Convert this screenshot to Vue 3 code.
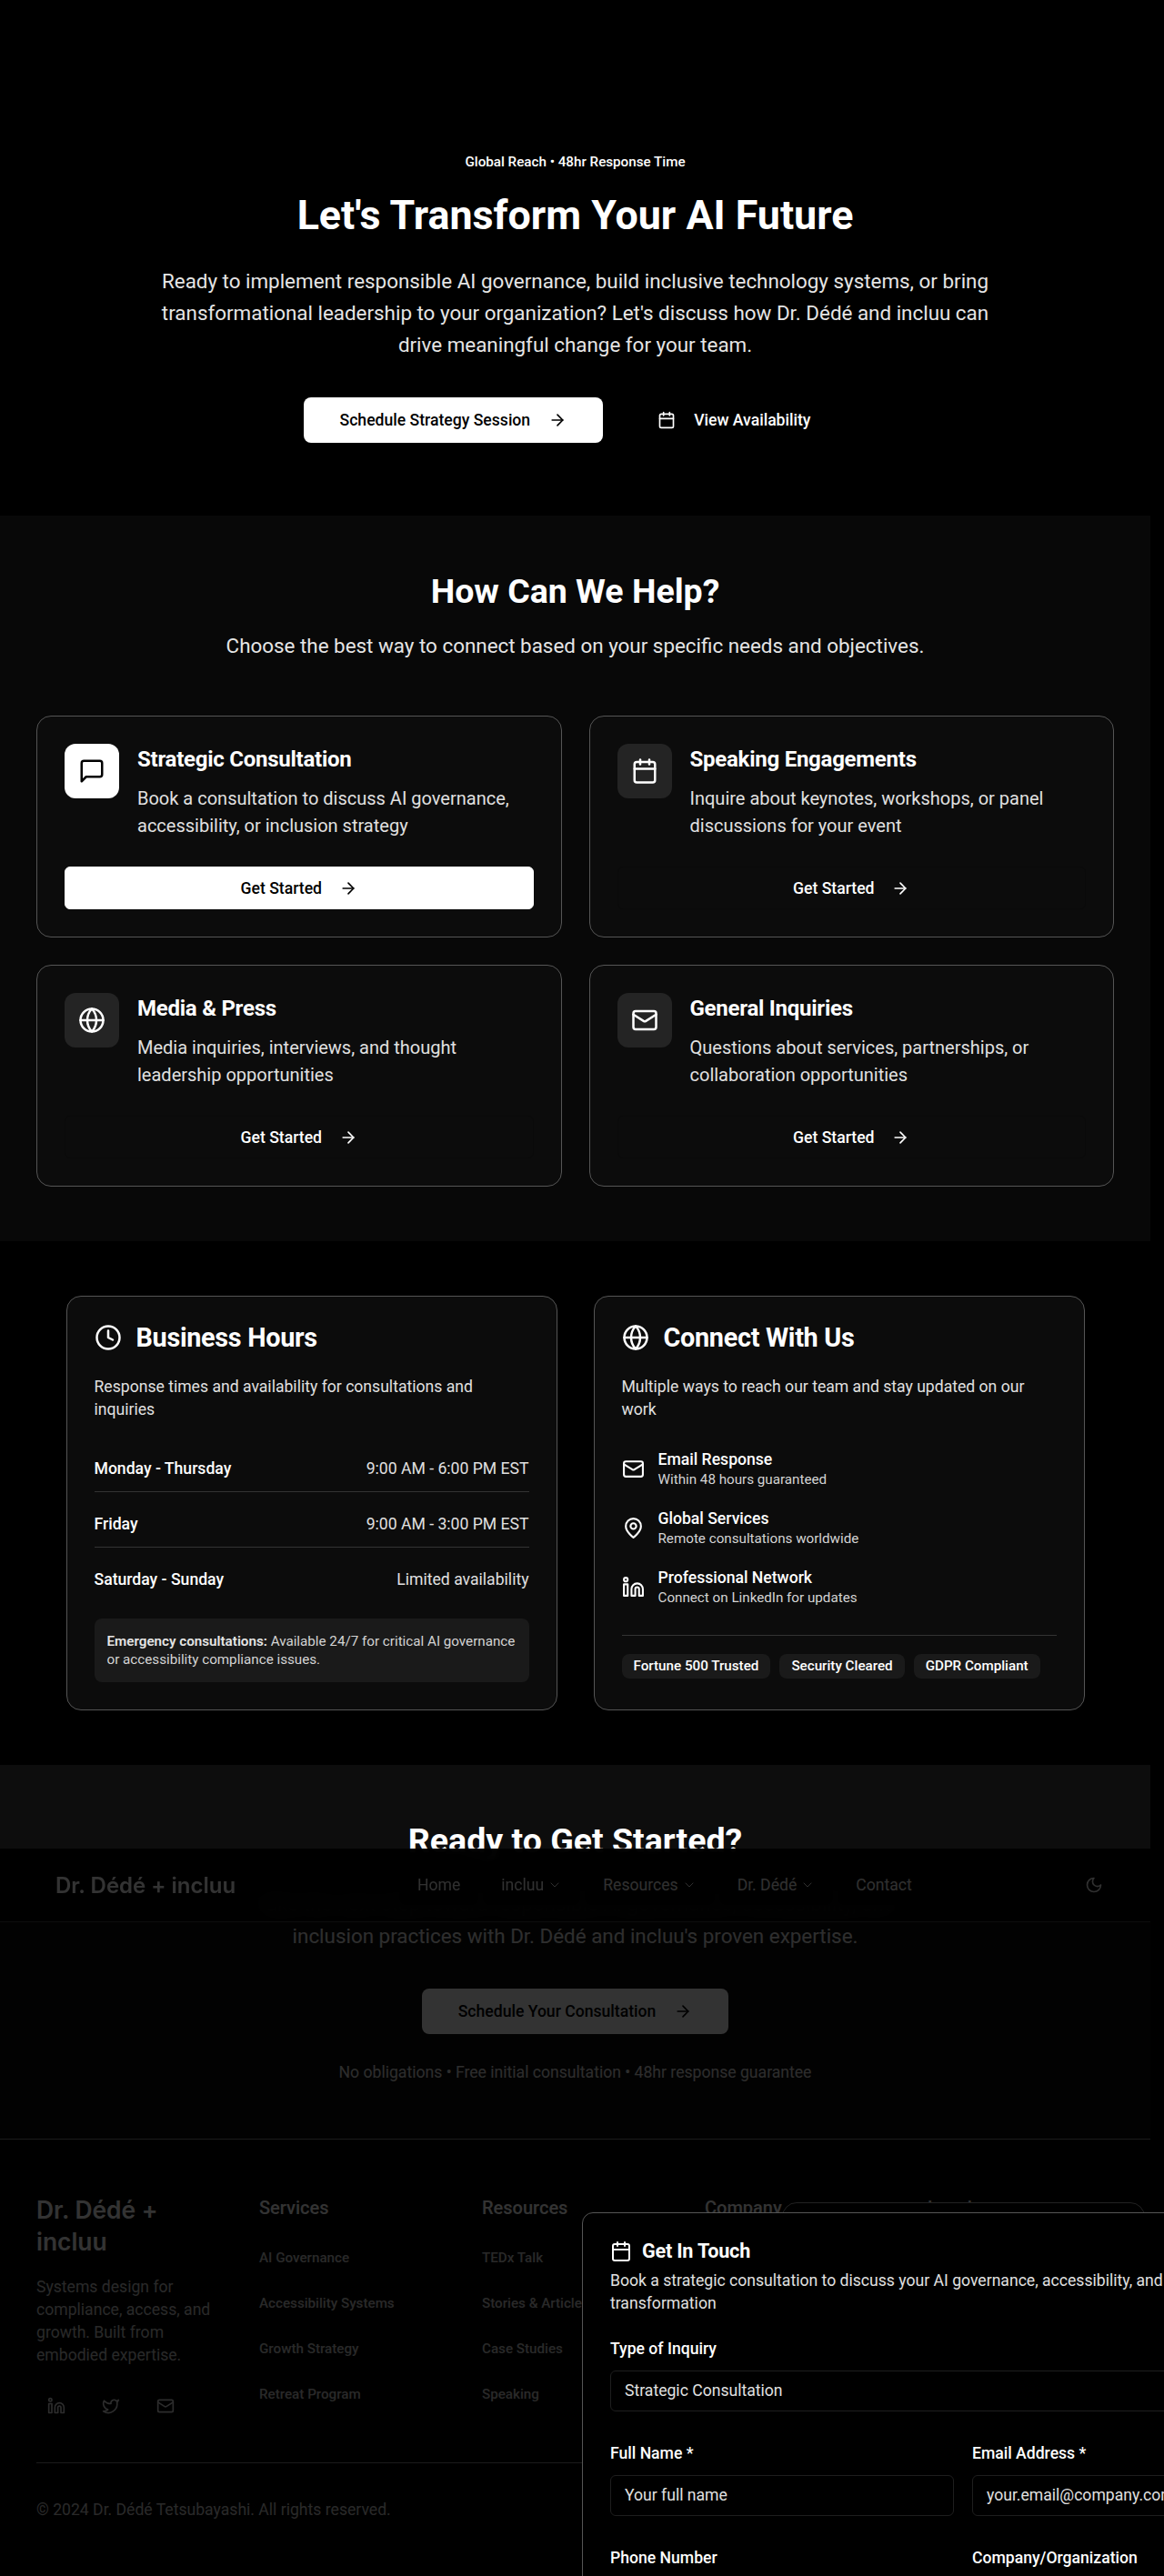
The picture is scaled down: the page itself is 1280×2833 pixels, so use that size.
<script setup>
const icons = {
  arrow: '<path d="M5 12h14"/><path d="m12 5 7 7-7 7"/>',
  calendar: '<rect x="3" y="4" width="18" height="18" rx="2"/><path d="M16 2v4"/><path d="M8 2v4"/><path d="M3 10h18"/>',
  message: '<path d="M21 15a2 2 0 0 1-2 2H7l-4 4V5a2 2 0 0 1 2-2h14a2 2 0 0 1 2 2z"/>',
  globe: '<circle cx="12" cy="12" r="10"/><path d="M12 2a14.5 14.5 0 0 0 0 20 14.5 14.5 0 0 0 0-20"/><path d="M2 12h20"/>',
  mail: '<rect x="2" y="4" width="20" height="16" rx="2"/><path d="m22 7-8.97 5.7a1.94 1.94 0 0 1-2.06 0L2 7"/>',
  clock: '<circle cx="12" cy="12" r="10"/><path d="M12 6v6l4 2"/>',
  pin: '<path d="M20 10c0 6-8 12-8 12s-8-6-8-12a8 8 0 0 1 16 0Z"/><circle cx="12" cy="10" r="3"/>',
  linkedin: '<path d="M16 8a6 6 0 0 1 6 6v7h-4v-7a2 2 0 0 0-2-2 2 2 0 0 0-2 2v7h-4v-7a6 6 0 0 1 6-6z"/><rect x="2" y="9" width="4" height="12"/><circle cx="4" cy="4" r="2"/>',
  twitter: '<path d="M22 4s-.7 2.1-2 3.4c1.6 10-9.4 17.3-18 11.6 2.2.1 4.4-.6 6-2C3 15.5.5 9.6 3 5c2.2 2.6 5.6 4.1 9 4-.9-4.2 4-6.6 7-3.8 1.1 0 3-1.2 3-1.2z"/>',
  moon: '<path d="M12 3a6 6 0 0 0 9 9 9 9 0 1 1-9-9Z"/>',
  chevron: '<path d="m6 9 6 6 6-6"/>'
}

const helpCards = [
  { icon: 'message', title: 'Strategic Consultation', text: 'Book a consultation to discuss AI governance, accessibility, or inclusion strategy', primary: true },
  { icon: 'calendar', title: 'Speaking Engagements', text: 'Inquire about keynotes, workshops, or panel discussions for your event' },
  { icon: 'globe', title: 'Media & Press', text: 'Media inquiries, interviews, and thought leadership opportunities' },
  { icon: 'mail', title: 'General Inquiries', text: 'Questions about services, partnerships, or collaboration opportunities' }
]

const hours = [
  { day: 'Monday - Thursday', time: '9:00 AM - 6:00 PM EST' },
  { day: 'Friday', time: '9:00 AM - 3:00 PM EST' },
  { day: 'Saturday - Sunday', time: 'Limited availability' }
]

const channels = [
  { icon: 'mail', title: 'Email Response', text: 'Within 48 hours guaranteed' },
  { icon: 'pin', title: 'Global Services', text: 'Remote consultations worldwide' },
  { icon: 'linkedin', title: 'Professional Network', text: 'Connect on LinkedIn for updates' }
]

const chips = ['Fortune 500 Trusted', 'Security Cleared', 'GDPR Compliant']

const footerCols = [
  { title: 'Services', links: ['AI Governance', 'Accessibility Systems', 'Growth Strategy', 'Retreat Program'] },
  { title: 'Resources', links: ['TEDx Talk', 'Stories & Articles', 'Case Studies', 'Speaking'] },
  { title: 'Company', links: ['About', 'incluu', 'Contact', 'Careers'] },
  { title: 'Legal', links: ['Privacy Policy', 'Terms of Service', 'Accessibility', 'Cookies'] }
]

const navLinks = [
  { label: 'Home' },
  { label: 'incluu', menu: true },
  { label: 'Resources', menu: true },
  { label: 'Dr. Dédé', menu: true },
  { label: 'Contact' }
]
</script>

<template>
  <div class="page">
    <main class="content">
      <section class="hero">
        <p class="badge">Global Reach • 48hr Response Time</p>
        <h1>Let's Transform Your AI Future</h1>
        <p class="lead hero-lead">Ready to implement responsible AI governance, build inclusive technology systems, or bring transformational leadership to your organization? Let's discuss how Dr. Dédé and incluu can drive meaningful change for your team.</p>
        <div class="hero-actions">
          <a class="btn btn-white">Schedule Strategy Session<svg class="ic i20" viewBox="0 0 24 24" v-html="icons.arrow"></svg></a>
          <a class="btn btn-plain"><svg class="ic i20" viewBox="0 0 24 24" v-html="icons.calendar"></svg>View Availability</a>
        </div>
      </section>

      <section class="help">
        <h2>How Can We Help?</h2>
        <p class="lead help-lead">Choose the best way to connect based on your specific needs and objectives.</p>
        <div class="help-grid">
          <article v-for="c in helpCards" :key="c.title" class="card help-card">
            <div class="help-top">
              <div class="icon-box" :class="{ 'icon-box-white': c.primary }">
                <svg class="ic i30" viewBox="0 0 24 24" v-html="icons[c.icon]"></svg>
              </div>
              <div>
                <h3>{{ c.title }}</h3>
                <p>{{ c.text }}</p>
              </div>
            </div>
            <a class="btn-card" :class="{ 'btn-card-white': c.primary }">Get Started<svg class="ic i20" viewBox="0 0 24 24" v-html="icons.arrow"></svg></a>
          </article>
        </div>
      </section>

      <section class="info">
        <div class="info-grid">
          <article class="card info-card">
            <h3 class="info-title"><svg class="ic i30" viewBox="0 0 24 24" v-html="icons.clock"></svg>Business Hours</h3>
            <p class="info-text">Response times and availability for consultations and inquiries</p>
            <ul class="hours">
              <li v-for="h in hours" :key="h.day"><strong>{{ h.day }}</strong><span>{{ h.time }}</span></li>
            </ul>
            <p class="emergency"><strong>Emergency consultations:</strong> Available 24/7 for critical AI governance or accessibility compliance issues.</p>
          </article>
          <article class="card info-card">
            <h3 class="info-title"><svg class="ic i30" viewBox="0 0 24 24" v-html="icons.globe"></svg>Connect With Us</h3>
            <p class="info-text">Multiple ways to reach our team and stay updated on our work</p>
            <ul class="channels">
              <li v-for="c in channels" :key="c.title">
                <svg class="ic i25" viewBox="0 0 24 24" v-html="icons[c.icon]"></svg>
                <div><strong>{{ c.title }}</strong><span>{{ c.text }}</span></div>
              </li>
            </ul>
            <div class="chips"><span v-for="c in chips" :key="c">{{ c }}</span></div>
          </article>
        </div>
      </section>

      <section class="ready">
        <h2>Ready to Get Started?</h2>
        <p class="lead ready-lead">Take the next step toward responsible AI governance, accessibility, and inclusion practices with Dr. Dédé and incluu's proven expertise.</p>
        <a class="btn btn-white">Schedule Your Consultation<svg class="ic i20" viewBox="0 0 24 24" v-html="icons.arrow"></svg></a>
        <p class="ready-note">No obligations • Free initial consultation • 48hr response guarantee</p>
      </section>

      <footer class="footer">
        <div class="footer-grid">
          <div>
            <div class="footer-logo">Dr. Dédé + incluu</div>
            <p class="footer-text">Systems design for compliance, access, and growth. Built from embodied expertise.</p>
            <div class="socials">
              <a><svg class="ic i20" viewBox="0 0 24 24" v-html="icons.linkedin"></svg></a>
              <a><svg class="ic i20" viewBox="0 0 24 24" v-html="icons.twitter"></svg></a>
              <a><svg class="ic i20" viewBox="0 0 24 24" v-html="icons.mail"></svg></a>
            </div>
          </div>
          <div v-for="col in footerCols" :key="col.title">
            <h4>{{ col.title }}</h4>
            <ul class="footer-links"><li v-for="l in col.links" :key="l">{{ l }}</li></ul>
          </div>
        </div>
        <div class="footer-bottom">© 2024 Dr. Dédé Tetsubayashi. All rights reserved.</div>
      </footer>
    </main>

    <header class="topnav">
      <div class="nav-logo">Dr. Dédé + incluu</div>
      <nav class="nav-links">
        <a v-for="n in navLinks" :key="n.label">{{ n.label }}<svg v-if="n.menu" class="ic i16 thin" viewBox="0 0 24 24" v-html="icons.chevron"></svg></a>
      </nav>
      <svg class="ic i20 moon" viewBox="0 0 24 24" v-html="icons.moon"></svg>
    </header>

    <div class="scrim">
      <div class="back-panel"></div>
      <aside class="modal">
        <h3 class="modal-title"><svg class="ic i24" viewBox="0 0 24 24" v-html="icons.calendar"></svg>Get In Touch</h3>
        <p class="modal-text">Book a strategic consultation to discuss your AI governance, accessibility, and transformation</p>
        <label class="field-label field-first">Type of Inquiry</label>
        <div class="field">Strategic Consultation</div>
        <div class="form-row">
          <div>
            <label class="field-label">Full Name *</label>
            <div class="field">Your full name</div>
          </div>
          <div>
            <label class="field-label">Email Address *</label>
            <div class="field">your.email@company.com</div>
          </div>
        </div>
        <div class="form-row">
          <div>
            <label class="field-label">Phone Number</label>
            <div class="field">+1 (555) 000-0000</div>
          </div>
          <div>
            <label class="field-label">Company/Organization</label>
            <div class="field">Your company</div>
          </div>
        </div>
      </aside>
    </div>
  </div>
</template>

<style>
html, body { margin: 0; background: #000; }
</style>

<style scoped>
* { box-sizing: border-box; }
.page { position: relative; width: 1280px; height: 2833px; overflow: hidden; background: #000; color: #fff; font-family: Roboto, "Liberation Sans", sans-serif; }
.content { width: 1265px; }
h1, h2, h3, h4, p, ul { margin: 0; padding: 0; }
ul { list-style: none; }
.ic { display: block; flex: none; fill: none; stroke: currentColor; stroke-width: 2; stroke-linecap: round; stroke-linejoin: round; }
.thin { stroke-width: 1.5; }
.i16 { width: 16px; height: 16px; }
.i20 { width: 20px; height: 20px; }
.i24 { width: 24px; height: 24px; }
.i25 { width: 25px; height: 25px; }
.i30 { width: 30px; height: 30px; }

.lead { font-size: 22.4px; line-height: 35px; color: #e5e5e5; }
h2 { font-size: 37.5px; line-height: 46px; font-weight: 700; text-align: center; }

.hero { padding: 168px 0 80px; text-align: center; }
.badge { font-size: 15.2px; line-height: 20px; font-weight: 500; }
h1 { margin-top: 23px; font-size: 44.8px; line-height: 52px; font-weight: 700; }
.hero-lead { width: 930px; margin: 29px auto 0; }
.hero-actions { display: flex; justify-content: center; gap: 20px; margin-top: 40px; }
.btn { display: inline-flex; align-items: center; gap: 20px; height: 50px; padding: 0 39px; border: 1px solid transparent; border-radius: 8px; font-size: 17.6px; font-weight: 500; }
.btn-white { background: #fff; color: #000; }
.btn-plain { color: #fff; }

.help { padding: 60px 40px; background: #080808; }
.help-lead { margin-top: 20px; text-align: center; }
.help-grid { display: grid; grid-template-columns: 1fr 1fr; gap: 30px; margin-top: 59px; }
.card { background: #0c0c0c; border: 1px solid #555; border-radius: 16px; }
.help-card { padding: 30px; height: 244px; }
.help-top { display: flex; gap: 20px; }
.icon-box { display: flex; align-items: center; justify-content: center; flex: none; width: 60px; height: 60px; border-radius: 12px; background: #242424; color: #fff; }
.icon-box-white { background: #fff; color: #000; }
.help-card h3 { margin-top: 1px; font-size: 24px; line-height: 32px; font-weight: 700; letter-spacing: -0.25px; }
.help-card p { margin-top: 12px; font-size: 20px; line-height: 30px; color: #e0e0e0; }
.btn-card { display: flex; align-items: center; justify-content: center; gap: 19px; height: 47px; margin-top: 30px; border: 1px solid #0a0a0a; border-radius: 6px; color: #fff; font-size: 17.6px; font-weight: 500; }
.btn-card-white { background: #fff; border-color: #fff; color: #000; }

.info { padding: 60px 0; }
.info-grid { display: grid; grid-template-columns: 540px 540px; gap: 40px; justify-content: center; }
.info-card { padding: 30px; height: 456px; }
.info-title { display: flex; align-items: center; gap: 16px; font-size: 28.8px; line-height: 30px; font-weight: 700; letter-spacing: -0.3px; }
.info-text { margin-top: 27px; font-size: 17.6px; line-height: 25px; color: #e0e0e0; }
.hours { margin-top: 40px; font-size: 17.6px; line-height: 25px; }
.hours li { display: flex; justify-content: space-between; padding-bottom: 12px; margin-bottom: 23px; border-bottom: 1px solid #333; }
.hours li:last-child { padding: 0; margin: 0; border: 0; }
.hours strong { font-weight: 500; }
.hours span { color: #e0e0e0; }
.emergency { margin-top: 30px; padding: 15px 14px; border-radius: 8px; background: #1a1a1a; font-size: 15.2px; line-height: 20px; color: #d4d4d4; }
.emergency strong { font-weight: 600; color: #e5e5e5; }
.channels { display: flex; flex-direction: column; gap: 21px; margin-top: 30px; }
.channels li { display: flex; align-items: center; gap: 15px; }
.channels strong { display: block; font-size: 17.6px; line-height: 24px; font-weight: 500; }
.channels span { display: block; font-size: 15.2px; line-height: 20px; color: #d4d4d4; }
.chips { display: flex; gap: 10px; margin-top: 31px; padding-top: 20px; border-top: 1px solid #333; }
.chips span { height: 27px; padding: 0 13px; border-radius: 8px; background: #1a1a1a; font-size: 15.2px; line-height: 27px; font-weight: 500; }

.ready { padding: 60px 40px; background: #0d0d0d; text-align: center; }
.ready-lead { width: 770px; margin: 30px auto 40px; }
.ready .btn { vertical-align: top; }
.ready-note { margin-top: 30px; font-size: 17.6px; line-height: 25px; color: #e0e0e0; }

.footer { padding: 60px 40px 0; border-top: 1px solid #888; background: #000; }
.footer-grid { display: grid; grid-template-columns: repeat(5, 1fr); gap: 40px; }
.footer-logo { width: 180px; font-family: Inter, Roboto, sans-serif; font-size: 26.4px; line-height: 35px; font-weight: 600; color: #fff; }
.footer-text { margin-top: 20px; font-size: 17.6px; line-height: 25px; color: #ccc; }
.socials { display: flex; gap: 16px; margin-top: 21px; }
.socials a { display: flex; align-items: center; justify-content: center; width: 44px; height: 44px; color: #ddd; }
.footer h4 { font-size: 20px; line-height: 30px; font-weight: 500; }
.footer-links { display: flex; flex-direction: column; gap: 16px; margin-top: 23px; }
.footer-links li { font-size: 15.2px; line-height: 34px; font-weight: 500; color: #ccc; }
.footer-bottom { margin-top: 40px; padding-top: 39px; border-top: 1px solid #888; font-size: 17.6px; line-height: 25px; color: #ccc; }

.topnav { position: absolute; top: 2033px; left: 0; display: flex; align-items: center; width: 1265px; height: 81px; padding: 0 52px 0 61px; border-bottom: 1px solid #444; background: rgba(0, 0, 0, 0.85); backdrop-filter: blur(12px); }
.nav-logo { width: 198px; font-family: Inter, Roboto, sans-serif; font-size: 24px; font-weight: 600; white-space: nowrap; }
.nav-links { display: flex; gap: 5px; margin-left: 180px; }
.nav-links a { display: flex; align-items: center; gap: 4px; height: 44px; padding: 0 20px; border-radius: 8px; background: #000; font-size: 17.6px; color: #eee; }
.moon { margin-left: auto; color: #eee; }

.scrim { position: absolute; top: 2033px; left: 0; right: 0; bottom: 0; background: rgba(0, 0, 0, 0.8); }
.back-panel { position: absolute; top: 389px; left: 860px; width: 399px; height: 200px; border: 1px solid #222; border-radius: 16px; background: #000; }
.modal { position: absolute; top: 400px; left: 640px; width: 838px; height: 600px; padding: 30px; border: 1px solid #555; border-radius: 12px; background: #000; }
.modal-title { display: flex; align-items: center; gap: 11px; font-size: 21.6px; line-height: 24px; font-weight: 700; letter-spacing: -0.2px; }
.modal-text { width: 610px; margin-top: 8px; font-size: 17.6px; line-height: 25px; color: #e0e0e0; }
.field-label { display: block; font-size: 17.6px; line-height: 24px; font-weight: 500; margin-top: 24px; }
.field-first { margin-top: 25px; }
.field { height: 45px; margin-top: 12px; padding: 0 15px; border: 1px solid #1e1e1e; border-radius: 6px; font-size: 17.6px; line-height: 43px; color: #e0e0e0; white-space: nowrap; }
.form-row { display: grid; grid-template-columns: 378px 378px; gap: 20px; margin-top: 10px; }
</style>
